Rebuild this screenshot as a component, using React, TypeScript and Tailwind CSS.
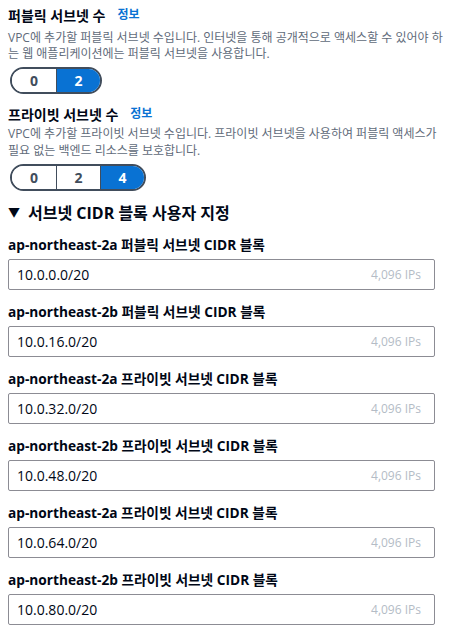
import React from 'react';

const font = { fontFamily: '"Open Sans", "Noto Sans CJK KR", sans-serif' };

type SegProps = { options: string[]; selected: string };

const Segmented: React.FC<SegProps> = ({ options, selected }) => (
  <div className="inline-flex h-[27px] rounded-full border-2 border-[#414d5c] overflow-hidden">
    {options.map((o, i) => (
      <div
        key={o}
        className={`w-[44px] flex items-center justify-center text-[14px] font-bold ${
          i > 0 ? 'border-l border-[#414d5c]' : ''
        } ${o === selected ? 'bg-[#0972d3] text-white' : 'bg-white text-[#414d5c]'}`}
      >
        {o}
      </div>
    ))}
  </div>
);

const subnets = [
  ['ap-northeast-2a 퍼블릭 서브넷 CIDR 블록', '10.0.0.0/20'],
  ['ap-northeast-2b 퍼블릭 서브넷 CIDR 블록', '10.0.16.0/20'],
  ['ap-northeast-2a 프라이빗 서브넷 CIDR 블록', '10.0.32.0/20'],
  ['ap-northeast-2b 프라이빗 서브넷 CIDR 블록', '10.0.48.0/20'],
  ['ap-northeast-2a 프라이빗 서브넷 CIDR 블록', '10.0.64.0/20'],
  ['ap-northeast-2b 프라이빗 서브넷 CIDR 블록', '10.0.80.0/20'],
];

export default function App() {
  return (
    <div className="w-[456px] h-[641px] bg-white overflow-hidden pl-[8px] pt-[5px] text-[#000716]" style={font}>
      {/* public subnets */}
      <div className="flex items-center h-[20px] gap-[12px]">
        <span className="text-[14px] font-semibold">퍼블릭 서브넷 수</span>
        <span className="text-[12px] font-bold text-[#0972d3]">정보</span>
      </div>
      <p className="w-[442px] mt-[5px] text-[12px] leading-[16px] text-[#5f6b7a] break-all">
        VPC에 추가할 퍼블릭 서브넷 수입니다. 인터넷을 통해 공개적으로 액세스할 수 있어야 하는 웹 애플리케이션에는 퍼블릭 서브넷을 사용합니다.
      </p>
      <div className="mt-[5px] pl-[2px]">
        <Segmented options={['0', '2']} selected="2" />
      </div>

      {/* private subnets */}
      <div className="flex items-center h-[20px] gap-[12px] mt-[10px]">
        <span className="text-[14px] font-semibold">프라이빗 서브넷 수</span>
        <span className="text-[12px] font-bold text-[#0972d3]">정보</span>
      </div>
      <p className="w-[442px] mt-[1px] text-[12px] leading-[17px] text-[#5f6b7a] break-all">
        VPC에 추가할 프라이빗 서브넷 수입니다. 프라이빗 서브넷을 사용하여 퍼블릭 액세스가 필요 없는 백엔드 리소스를 보호합니다.
      </p>
      <div className="mt-[5px] pl-[2px]">
        <Segmented options={['0', '2', '4']} selected="4" />
      </div>

      {/* custom CIDR */}
      <div className="mt-[11px] flex items-center h-[22px] gap-[8px]">
        <span className="text-[12px] leading-none">▼</span>
        <span className="text-[16px] font-bold">서브넷 CIDR 블록 사용자 지정</span>
      </div>

      <div className="mt-[11px] w-[427px] flex flex-col gap-[12px]">
        {subnets.map(([label, value], i) => (
          <div key={i} className="flex flex-col gap-[4px]">
            <div className="h-[20px] flex items-center text-[13.7px] font-bold">{label}</div>
            <div className="h-[31px] border border-[#8c8c94] rounded-[2px] flex items-center justify-between pl-[8px] pr-[13px]">
              <span className="text-[14px]">{value}</span>
              <span className="text-[12px] text-[#b4bcc6]">4,096 IPs</span>
            </div>
          </div>
        ))}
      </div>
    </div>
  );
}
